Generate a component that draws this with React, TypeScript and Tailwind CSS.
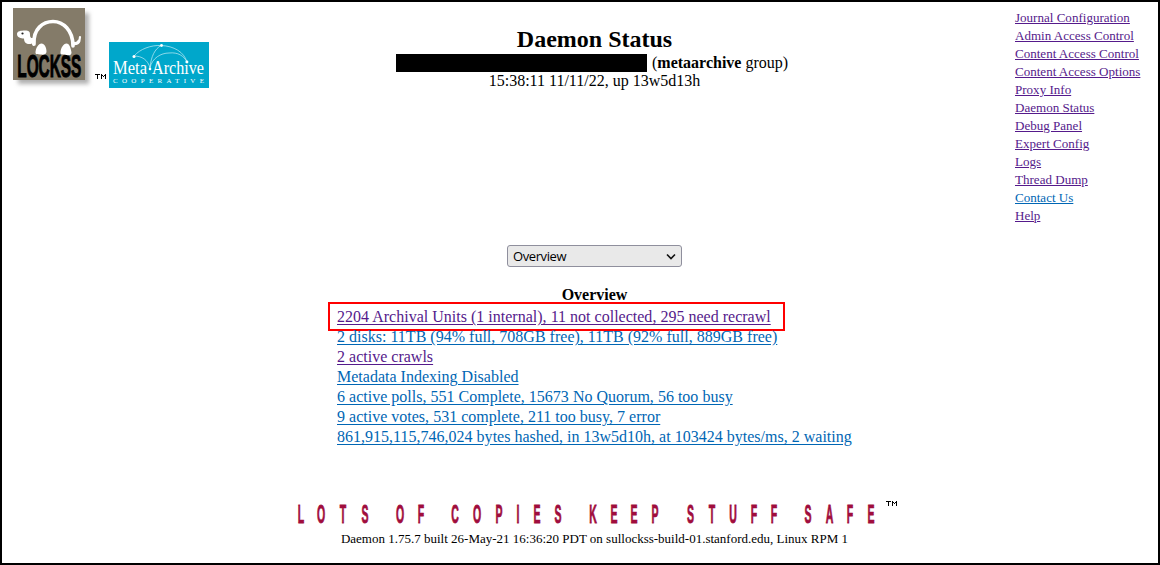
const navLinks = [
  'Journal Configuration',
  'Admin Access Control',
  'Content Access Control',
  'Content Access Options',
  'Proxy Info',
  'Daemon Status',
  'Debug Panel',
  'Expert Config',
  'Logs',
  'Thread Dump',
  'Contact Us',
  'Help',
];

const overview = [
  { text: '2204 Archival Units (1 internal), 11 not collected, 295 need recrawl', visited: true, marked: true },
  { text: '2 disks: 11TB (94% full, 708GB free), 11TB (92% full, 889GB free)' },
  { text: '2 active crawls', visited: true },
  { text: 'Metadata Indexing Disabled' },
  { text: '6 active polls, 551 Complete, 15673 No Quorum, 56 too busy' },
  { text: '9 active votes, 531 complete, 211 too busy, 7 error' },
  { text: '861,915,115,746,024 bytes hashed, in 13w5d10h, at 103424 bytes/ms, 2 waiting' },
];

const slogan = 'LOTS OF COPIES KEEP STUFF SAFE';
// Horizontal centre of each character, spaces included.
const sloganCentres = [
  301, 321, 343, 365, 380, 400, 421, 436, 455, 477, 499, 518, 537, 558, 573, 593, 614, 634, 655, 670, 690.5, 712,
  733, 754, 774, 790, 808, 829.5, 850, 871,
];
const SQUEEZE = 0.42;

function LockssLogo() {
  return (
    <svg width="84" height="82" viewBox="0 0 84 82" className="block">
      <defs>
        <filter id="soft" x="-20%" y="-20%" width="140%" height="140%">
          <feGaussianBlur stdDeviation="2" />
        </filter>
      </defs>
      <rect x="5" y="5" width="71" height="71" fill="#b0b0b0" filter="url(#soft)" />
      <rect width="72" height="72" fill="#847b69" />
      <g stroke="#fff" fill="none" strokeLinecap="round">
        <path d="M21 36C20 21 30 13.500 40 13.500S60 22 60 38" strokeWidth="3.6" />
        <path d="M60 36.500c4 0 7-3 7-7.500" strokeWidth="2.2" />
        <path d="M60 35c3 1 5 0 6-2" strokeWidth="3" />
      </g>
      <path
        d="M4 26c0-3 4-3.500 8-3.500 4 0 5 1 5 4 0 3 1 4 3.500 3.500l1 7.500c-1.500 1-2 0-2.500-2-4 1.500-8 0-8-5-3 0-7-1-7-4.500z"
        fill="#fff"
      />
      <circle cx="9.500" cy="25.500" r="1.1" fill="#222" />
      <text
        x="8"
        y="69"
        transform="scale(0.53 1)"
        textLength="121"
        lengthAdjust="spacingAndGlyphs"
        className="font-['Liberation_Sans'] text-[32px] font-bold"
        stroke="#000"
        strokeWidth="1"
      >
        LOCKSS
      </text>
      <path
        d="M22.500 45c0-5 3-9.500 6-9.500s5 4 5 8c0 3-3 3.500-6 3s-5 0-5-1.500zM47.500 45c0-5 3-9.500 6-9.500s4.500 5 5 9c0 3-2.500 3-5 2.500s-6 0-6-2z"
        fill="#fff"
      />
    </svg>
  );
}

function MetaArchiveLogo() {
  return (
    <svg width="100" height="46" viewBox="0 0 100 46" className="block">
      <rect width="100" height="46" fill="#00a7cb" />
      <g stroke="#c6edf5" strokeWidth="0.7" fill="none">
        <path d="M25 14C31 7 42 3 52 3.500C65 4 75 10 78 20" />
        <path d="M25 14C33 14 39 18 41 26C42 14 46 7 52 3.500" />
        <path d="M41 26C43 16 52 11 60 11C69 10 75 14 78 20" />
      </g>
      <g fill="#fff">
        <circle cx="25" cy="14.500" r="1.5" />
        <circle cx="52.500" cy="3.500" r="1.4" />
        <circle cx="78" cy="20" r="1.4" />
        <circle cx="41" cy="27" r="1.3" />
        <text x="4" y="31.500" textLength="34" lengthAdjust="spacingAndGlyphs" className="font-['Liberation_Serif'] text-[18px]">
          Meta
        </text>
        <text x="43" y="31.500" textLength="52" lengthAdjust="spacingAndGlyphs" className="font-['Liberation_Serif'] text-[18px]">
          Archive
        </text>
        <text x="4" y="40.500" textLength="91" className="font-['Liberation_Serif'] text-[7px]">
          COOPERATIVE
        </text>
      </g>
    </svg>
  );
}

function TradeMark() {
  return (
    <svg width="11" height="6" viewBox="0 0 11 6" className="block" shapeRendering="crispEdges">
      <path d="M0 .5h5M2.500 0v5M6.500 0v5M10.500 0v5M7 1.500h1M9 1.500h1M8 2.500h1" stroke="#000" fill="none" />
    </svg>
  );
}

export default function App() {
  return (
    <div className="flex h-[565px] w-[1160px] flex-col overflow-hidden border-2 border-black bg-white font-['Liberation_Serif',serif] whitespace-nowrap text-black">
      <header className="flex h-[243px] items-start">
        <div className="flex w-[390px] items-start pt-[6px] pl-[11px]">
          <LockssLogo />
          <div className="-ml-[2px] pt-[66px]">
            <TradeMark />
          </div>
          <div className="ml-[3px] pt-[34px]">
            <MetaArchiveLogo />
          </div>
        </div>
        <div className="flex w-[405px] flex-col items-center pt-[23px]">
          <h1 className="text-[24px] leading-[28px] font-bold">Daemon Status</h1>
          <div className="flex h-[19px] w-full items-start pl-[4px] text-[16px] leading-[18px]">
            <span className="mt-px mr-[5px] h-[18px] w-[251px] bg-black" />
            <span className="pt-px">
              (<b>metaarchive</b> group)
            </span>
          </div>
          <div className="text-[16px] leading-[18px]">15:38:11 11/11/22, up 13w5d13h</div>
        </div>
        <nav className="ml-auto flex w-[143px] flex-col items-start pt-[7px] text-[13.05px] leading-[18px]">
          {navLinks.map((label) => (
            <a
              key={label}
              href="#"
              className={label === 'Contact Us' ? 'text-[#0066b4] underline' : 'text-[#551a8b] underline'}
            >
              {label}
            </a>
          ))}
        </nav>
      </header>

      <main className="flex h-[253px] flex-col items-center pl-[29px]">
        <button className="flex h-[22px] w-[175px] items-center justify-between rounded-[3px] border border-[#8f8f9d] bg-[#e9e9e9] pr-[5px] pl-[5px] font-['Open_Sans',sans-serif] text-[13px] leading-[18px] tracking-[-0.4px]">
          <span>Overview</span>
          <svg width="10" height="7" viewBox="0 0 10 7">
            <path d="M1 1.500l4 4 4-4" fill="none" stroke="#111" strokeWidth="1.6" />
          </svg>
        </button>
        <section className="mt-[18px] w-[515px]">
          <h2 className="text-center text-[16px] leading-[20px] font-bold">Overview</h2>
          <ul className="pt-[2px] text-[16px] leading-[20px] tracking-[0.01px]">
            {overview.map((row) => (
              <li key={row.text} className="relative h-[20px]">
                <a
                  href="#"
                  className={
                    row.visited
                      ? 'text-[#551a8b] underline underline-offset-2'
                      : 'text-[#0066b4] underline underline-offset-2'
                  }
                >
                  {row.text}
                </a>
                {row.marked && (
                  <span className="absolute -top-[5px] -left-[9px] h-[29px] w-[457px] border-2 border-[#ff0000]" />
                )}
              </li>
            ))}
          </ul>
        </section>
      </main>

      <footer className="flex flex-col items-center">
        <div className="flex w-full items-start pl-[288px]">
          <svg width="596" height="32" viewBox="290 498 596 32" className="block">
            <text
              x={sloganCentres.map((c) => c / SQUEEZE).join(' ')}
              y="523"
              transform={`scale(${SQUEEZE} 1)`}
              textAnchor="middle"
              className="font-['Liberation_Sans'] text-[25px] font-bold"
              fill="#a00d3d"
              stroke="#a00d3d"
              strokeWidth="0.8"
            >
              {slogan}
            </text>
          </svg>
          <div className="pt-[3px]">
            <TradeMark />
          </div>
        </div>
        <p className="pl-[29px] text-[13px] leading-[18px]">
          Daemon 1.75.7 built 26-May-21 16:36:20 PDT on sullockss-build-01.stanford.edu, Linux RPM 1
        </p>
      </footer>
    </div>
  );
}
